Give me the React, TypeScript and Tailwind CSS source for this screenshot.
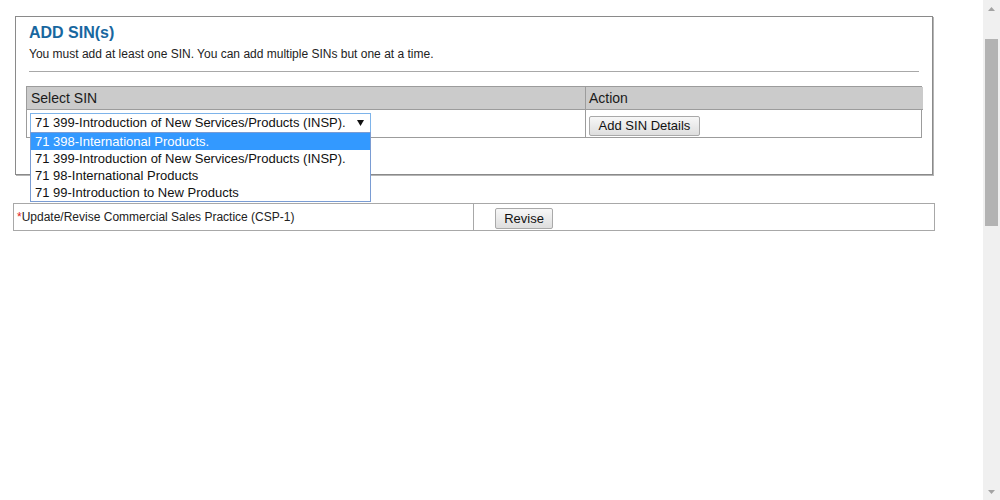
import React from "react";

const font = { fontFamily: '"Liberation Sans", Arial, sans-serif' };

function Scrollbar() {
  return (
    <div className="flex h-[500px] w-[17px] shrink-0 flex-col items-center bg-[#f0f0f0]">
      <div className="flex h-[17px] w-full items-center justify-center">
        <svg width="7" height="4" viewBox="0 0 7 4">
          <polygon points="0,4 3.5,0 7,4" fill="#a3a3a3" />
        </svg>
      </div>
      <div className="mt-[22px] h-[187px] w-[13px] bg-[#b3b3b3]" />
      <div className="flex-1" />
      <div className="flex h-[17px] w-full items-center justify-center">
        <svg width="7" height="4" viewBox="0 0 7 4">
          <polygon points="0,0 7,0 3.5,4" fill="#a3a3a3" />
        </svg>
      </div>
    </div>
  );
}

const options = [
  "71 398-International Products.",
  "71 399-Introduction of New Services/Products (INSP).",
  "71 98-International Products",
  "71 99-Introduction to New Products",
];

export default function App() {
  return (
    <div className="flex h-[500px] w-[1000px] overflow-hidden bg-white" style={font}>
      <div className="w-[983px] shrink-0 pt-[16px]">
        <div className="ml-[15px] h-[159px] w-[918px] border border-[#8a8a8a] shadow-[1px_1px_0_#b5b5b5] pl-[13px] pt-[7px]">
          <div className="text-[16px] font-bold leading-[18px] text-[#18679f]">ADD SIN(s)</div>
          <div className="mt-[5px] text-[12px] leading-[14px] text-[#222]">
            You must add at least one SIN. You can add multiple SINs but one at a time.
          </div>
          <div className="mt-[10px] h-px w-[890px] bg-[#a8a8a8]" />
          <div className="-ml-[3px] mt-[14px] grid w-[896px] grid-cols-[559px_337px] border border-[#9c9c9c]">
            <div className="h-[23px] border-r border-b border-[#9c9c9c] bg-[#cbcbcb] pl-[4px] text-[14px] leading-[23px] text-[#1a1a1a]">
              Select SIN
            </div>
            <div className="h-[23px] border-b border-[#9c9c9c] bg-[#cbcbcb] pl-[3px] text-[14px] leading-[23px] text-[#1a1a1a]">
              Action
            </div>
            <div className="h-[27px] border-r border-[#9c9c9c] pl-[3px] pt-[3px]">
              <div className="relative h-[20px] w-[341px]">
                <div className="flex h-[20px] w-[341px] items-center justify-between border border-[#7eb4ea] bg-white pl-[4px] pr-[6px] text-[13px] text-[#111]">
                  <span>71 399-Introduction of New Services/Products (INSP).</span>
                  <svg width="7" height="6" viewBox="0 0 7 6">
                    <polygon points="0,0 7,0 3.5,6" fill="#111" />
                  </svg>
                </div>
                <div className="absolute left-0 top-[19px] z-10 w-[341px] border border-[#7a9cd3] bg-white">
                  {options.map((o, i) => (
                    <div
                      key={o}
                      className={
                        i === 0
                          ? "h-[17px] bg-[#3399ff] pl-[4px] text-[13px] leading-[17px] text-white"
                          : "h-[17px] pl-[4px] text-[13px] leading-[17px] text-[#111]"
                      }
                    >
                      {o}
                    </div>
                  ))}
                </div>
              </div>
            </div>
            <div className="h-[27px] pl-[3px] pt-[3px]">
              <button className="h-[20px] w-[111px] rounded-[2px] border border-[#a9a9a9] bg-gradient-to-b from-[#f7f7f7] to-[#dedede] text-[13px] leading-[18px] text-[#111]">
                Add SIN Details
              </button>
            </div>
          </div>
        </div>
        <div className="ml-[13px] mt-[28px] grid h-[28px] w-[922px] grid-cols-[460px_1fr] border border-[#a8a8a8]">
          <div className="border-r border-[#a8a8a8] pl-[3px] text-[12px] leading-[26px] text-[#222]">
            <span className="text-[#e02020]">*</span>Update/Revise Commercial Sales Practice (CSP-1)
          </div>
          <div className="pl-[21px] pt-[2px]">
            <button className="h-[21px] w-[58px] rounded-[2px] border border-[#a9a9a9] bg-gradient-to-b from-[#f7f7f7] to-[#dedede] text-[13px] leading-[19px] text-[#111]">
              Revise
            </button>
          </div>
        </div>
      </div>
      <Scrollbar />
    </div>
  );
}
